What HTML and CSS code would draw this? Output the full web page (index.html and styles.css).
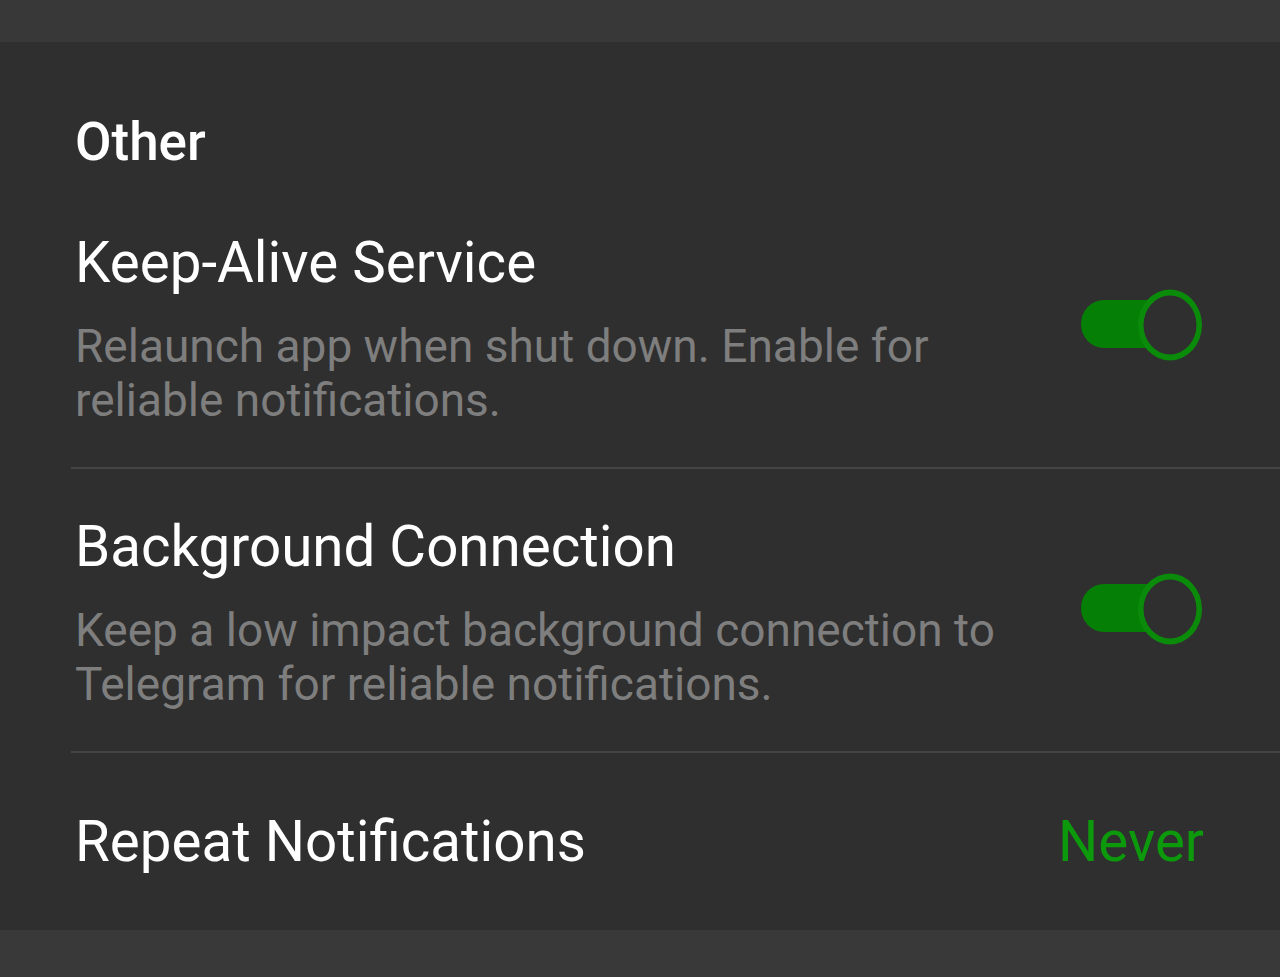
FILE: index.html
```html
<!DOCTYPE html>
<html lang="en">
<head>
    <meta charset="UTF-8">
    <meta name="viewport" content="width=device-width, initial-scale=1.0">
    <title>Notifications - Other</title>
    <link rel="stylesheet" href="styles.css">
</head>
<body>

    <div class="top-strip"></div>

    <div class="section">
        <h2 class="section-title">Other</h2>

        <!-- Keep-Alive -->
        <div class="row has-divider">
            <div class="row-text">
                <div class="row-title">Keep-Alive Service</div>
                <div class="row-desc">Relaunch app when shut down. Enable for<br>reliable notifications.</div>
            </div>
            <svg class="switch" width="122" height="72" viewBox="0 0 122 72">
                <rect x="0" y="11" width="95" height="48" rx="23" ry="24" fill="#067f06"/>
                <ellipse cx="89" cy="36" rx="32" ry="35.5" fill="#0a8c0a"/>
                <ellipse cx="89" cy="36" rx="26.5" ry="29.5" fill="#2f2f2f"/>
            </svg>
        </div>

        <!-- Background connection -->
        <div class="row has-divider">
            <div class="row-text">
                <div class="row-title">Background Connection</div>
                <div class="row-desc">Keep a low impact background connection to<br>Telegram for reliable notifications.</div>
            </div>
            <svg class="switch" width="122" height="72" viewBox="0 0 122 72">
                <rect x="0" y="11" width="95" height="48" rx="23" ry="24" fill="#067f06"/>
                <ellipse cx="89" cy="36" rx="32" ry="35.5" fill="#0a8c0a"/>
                <ellipse cx="89" cy="36" rx="26.5" ry="29.5" fill="#2f2f2f"/>
            </svg>
        </div>

        <!-- Repeat -->
        <div class="row single">
            <div class="row-title">Repeat Notifications</div>
            <div class="row-value">Never</div>
        </div>
    </div>

    <div class="bottom-strip"></div>

</body>
</html>
```

FILE: styles.css
```css
body {
    margin: 0;
    background-color: #2f2f2f;
    font-family: Roboto, "Liberation Sans", sans-serif;
    overflow: hidden;
}

.top-strip {
    height: 42px;
    background-color: #383838;
}

.section {
    padding-top: 69px;
}

/* セクション見出し */
.section-title {
    margin: 0 0 12px 75px;
    font-size: 53px;
    line-height: 62px;
    font-weight: 500;
    color: #ffffff;
}

.row {
    display: flex;
    align-items: center;
    justify-content: space-between;
    margin-left: 71px;
    padding: 45px 76px 40px 4px;
}

.has-divider {
    border-bottom: 2px solid #444444;
}

.row.single {
    height: 177px;
    padding-top: 0;
    padding-bottom: 0;
    box-sizing: border-box;
}

.row-title {
    font-size: 56.5px;
    line-height: 66px;
    color: #ffffff;
}

.row-desc {
    margin-top: 23px;
    font-size: 46px;
    line-height: 54px;
    color: #7e7e7e;
}

.row-value {
    font-size: 56.5px;
    line-height: 66px;
    color: #0c9a0c;
}

.switch {
    display: block;
    flex-shrink: 0;
    margin: 0 1px 7px 0;
}

.bottom-strip {
    height: 60px;
    background-color: #393939;
}
```
